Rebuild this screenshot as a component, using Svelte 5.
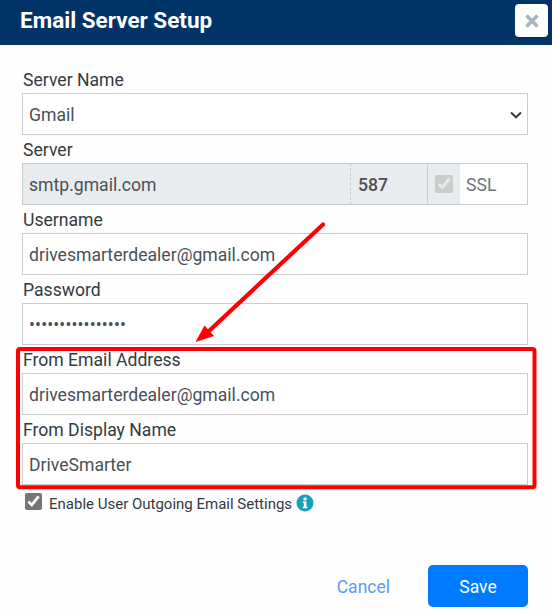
<script>
  let server = "smtp.gmail.com";
  let port = "587";
  let username = "drivesmarterdealer@gmail.com";
  let password = "drivesmarter1234";
  let fromEmail = "drivesmarterdealer@gmail.com";
  let fromName = "DriveSmarter";
  let enableOutgoing = true;
</script>

<div class="modal">
  <header class="modal-header">
    <h1>Email Server Setup</h1>
    <button class="close" aria-label="Close">
      <svg width="14" height="14" viewBox="0 0 14 14">
        <path d="M1.5 1.5 12.5 12.5M12.5 1.5 1.5 12.5" stroke="#a9b4be" stroke-width="3.6" fill="none" />
      </svg>
    </button>
  </header>

  <div class="modal-body">
    <label for="name">Server Name</label>
    <div class="select-wrap">
      <select id="name" class="control">
        <option>Gmail</option>
      </select>
      <svg class="chevron" width="12" height="8" viewBox="0 0 12 8">
        <path d="M1 1.5 6 6.3 11 1.5" stroke="#343a40" stroke-width="2" fill="none" />
      </svg>
    </div>

    <label for="server">Server</label>
    <div class="input-group">
      <input id="server" class="control host" readonly value={server} />
      <input class="control port" readonly value={port} />
      <div class="addon">
        <input type="checkbox" checked disabled />
      </div>
      <input class="control ssl" value="SSL" />
    </div>

    <label for="username">Username</label>
    <input id="username" class="control" value={username} />

    <label for="password">Password</label>
    <input id="password" class="control secret" type="password" value={password} />

    <label for="from-email">From Email Address</label>
    <input id="from-email" class="control" value={fromEmail} />

    <label for="from-name">From Display Name</label>
    <input id="from-name" class="control" value={fromName} />

    <div class="check-row">
      <input id="enable" type="checkbox" bind:checked={enableOutgoing} />
      <label for="enable">Enable User Outgoing Email Settings</label>
      <svg class="info" width="18" height="18" viewBox="0 0 18 18">
        <circle cx="9" cy="9" r="8.5" fill="#17a2b8" />
        <circle cx="9" cy="4.9" r="1.7" fill="#fff" />
        <path d="M6.8 7.5h3.6v5.2h1v1.5H6.8v-1.5h1v-3.7h-1z" fill="#fff" />
      </svg>
    </div>
  </div>

  <footer class="modal-footer">
    <button class="cancel">Cancel</button>
    <button class="save">Save</button>
  </footer>

  <!-- annotation drawn on top of the screenshot -->
  <svg class="markup" width="552" height="615" viewBox="0 0 552 615">
    <rect x="18" y="349" width="516.5" height="138.3" rx="2" fill="none" stroke="#f00" stroke-width="4" />
    <path d="M323 224.5 209 331" stroke="#f00" stroke-width="4.2" stroke-linecap="round" fill="none" />
    <path d="M195.5 342 204.5 325.5 214 336z" fill="#f00" />
  </svg>
</div>

<style>
  :global(body) {
    background: #fdfefd;
  }

  .modal {
    position: relative;
    width: 552px;
    height: 615px;
    font-family: Roboto, "Liberation Sans", sans-serif;
    font-size: 17.6px;
    color: #343a40;
    overflow: hidden;
  }

  .modal-header {
    display: flex;
    align-items: flex-start;
    justify-content: space-between;
    height: 45px;
    box-sizing: border-box;
    padding: 4px 4px 0 20px;
    background: #003366;
  }

  h1 {
    margin: 0;
    font-size: 22.5px;
    font-weight: 700;
    line-height: 33px;
    color: #fff;
  }

  .close {
    display: flex;
    align-items: center;
    justify-content: center;
    width: 33px;
    height: 33px;
    padding: 0;
    background: #fff;
    border: 0;
    border-radius: 4px;
  }

  .modal-body {
    display: flex;
    flex-direction: column;
    padding: 20px 24px 0 22px;
  }

  .modal-body > label {
    display: block;
    height: 28px;
    line-height: 30px;
    padding-left: 1px;
  }

  .control {
    box-sizing: border-box;
    width: 100%;
    height: 42px;
    margin: 0;
    padding: 1px 6px 0;
    font: inherit;
    color: #495057;
    background: #fff;
    border: 1.5px solid #ccc;
    border-radius: 0;
    outline: none;
  }

  .secret {
    letter-spacing: 0.13px;
  }

  .select-wrap {
    position: relative;
    height: 42px;
  }

  select.control {
    appearance: none;
    padding: 1px 6px 0;
  }

  .chevron {
    position: absolute;
    right: 6px;
    top: 18px;
  }

  .input-group {
    display: flex;
    height: 42px;
  }

  .host,
  .port {
    background: #e9ecef;
  }

  .host {
    flex: 0 0 329px;
    border-right: 1px dashed #ccc;
  }

  .port {
    flex: 0 0 76px;
    border-left: 0;
    border-right: 0;
    font-weight: 500;
    padding-left: 7px;
  }

  .addon {
    flex: 0 0 33px;
    box-sizing: border-box;
    display: flex;
    align-items: center;
    justify-content: center;
    background: #e9ecef;
    border: 1.5px solid #ccc;
    border-right: 0;
  }

  .addon input {
    width: 18px;
    height: 18px;
    margin: 0;
  }

  .ssl {
    flex: 1;
    width: auto;
    min-width: 0;
    color: #6c757d;
    border-left: 0;
    padding-left: 6px;
  }

  .check-row {
    display: flex;
    align-items: center;
    height: 20px;
    margin-top: 6px;
    padding-left: 3px;
  }

  .check-row input {
    width: 17px;
    height: 17px;
    margin: 0 7px 0 0;
    accent-color: #757575;
  }

  .check-row label {
    font-size: 15px;
    line-height: 20px;
    padding-top: 6px;
  }

  .info {
    margin-left: 4px;
    margin-top: 4px;
  }

  .modal-footer {
    position: absolute;
    right: 24px;
    bottom: 8px;
    display: flex;
    align-items: center;
    gap: 38px;
  }

  .modal-footer button {
    font: inherit;
    font-size: 17.5px;
    border: 0;
    padding: 2px 0 0;
    background: none;
  }

  .cancel {
    color: #5a9cf8;
  }

  .modal-footer .save {
    width: 100px;
    height: 42px;
    color: #fff;
    background: #007bff;
    border-radius: 5px;
  }

  .markup {
    position: absolute;
    left: 0;
    top: 0;
    pointer-events: none;
  }
</style>
